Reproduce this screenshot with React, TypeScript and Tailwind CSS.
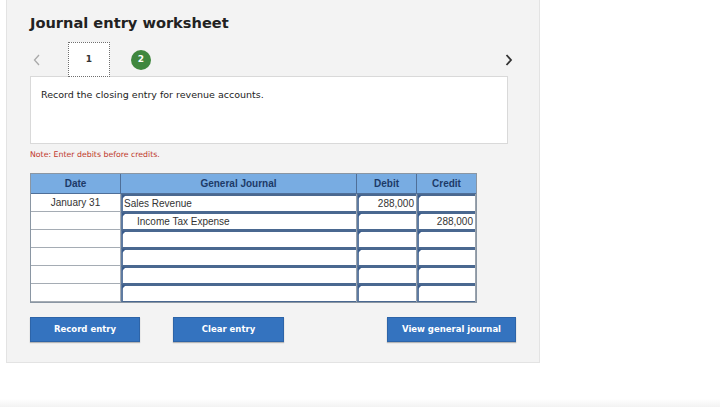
import { ReactNode } from "react";

const verdana = { fontFamily: '"DejaVu Sans", Verdana, sans-serif' };
const arial = { fontFamily: '"Liberation Sans", Arial, sans-serif' };

type Row = { date: string; account: string; indent?: boolean; debit: string; credit: string };

const rows: Row[] = [
  { date: "January 31", account: "Sales Revenue", debit: "288,000", credit: "" },
  { date: "", account: "Income Tax Expense", indent: true, debit: "", credit: "288,000" },
  { date: "", account: "", debit: "", credit: "" },
  { date: "", account: "", debit: "", credit: "" },
  { date: "", account: "", debit: "", credit: "" },
  { date: "", account: "", debit: "", credit: "" },
];

// editable cell: dark blue box with the little marker in the corner
function InputCell({ children, align = "left" }: { children?: ReactNode; align?: "left" | "right" }) {
  return (
    <div className="relative h-[18px] bg-white border-r border-[#9aa3ad]">
      <div
        className={`h-full border-t-2 border-l-2 border-b border-[#4a6890] border-l-[#5f7ba1] flex items-center text-[10px] text-[#333] ${
          align === "right" ? "justify-end pr-[2px]" : "pl-[1px]"
        }`}
      >
        {children}
      </div>
      <div className="absolute left-[1px] top-[1px] w-0 h-0 border-t-[4px] border-t-[#3b5d8c] border-r-[4px] border-r-transparent" />
    </div>
  );
}

function Button({ label, className }: { label: string; className: string }) {
  return (
    <button
      className={`${className} block h-[25px] bg-[#3473bf] border border-[#2d64a8] shadow-[0_1px_1px_rgba(0,0,0,0.25)] text-white font-bold text-[8.5px]`}
      style={verdana}
    >
      {label}
    </button>
  );
}

export default function App() {
  return (
    <div className="w-[720px] h-[407px] bg-white flex flex-col overflow-hidden">
      <div className="ml-[6px] w-[534px] bg-[#f3f3f3] border border-t-0 border-[#e3e3e3] pl-[23px] pt-[14px] pb-[20px]">
        <h1 className="h-[18px] leading-[18px] text-[14.6px] font-bold text-[#222]" style={verdana}>
          Journal entry worksheet
        </h1>

        {/* step navigation */}
        <div className="mt-[10px] h-[35px] w-[488px] flex items-center relative z-10">
          <svg width="8" height="12" viewBox="0 0 8 12" className="ml-[3px]">
            <polyline points="6,1 1.5,6 6,11" fill="none" stroke="#a9a9a9" strokeWidth="1.3" />
          </svg>
          <div className="ml-[27px] w-[42px] h-[35px] bg-white border border-dotted border-[#6f6f6f] flex items-center justify-center">
            <span className="text-[9px] font-bold text-[#333]" style={verdana}>1</span>
          </div>
          <div className="ml-[21px] w-[20px] h-[20px] rounded-full bg-[#3f873e] flex items-center justify-center">
            <span className="text-[9px] font-bold text-white" style={verdana}>2</span>
          </div>
          <svg width="8" height="12" viewBox="0 0 8 12" className="ml-auto mr-[5px]">
            <polyline points="1.5,1 6,6 1.5,11" fill="none" stroke="#333" strokeWidth="1.8" />
          </svg>
        </div>

        <div className="-mt-[1px] w-[478px] h-[68px] bg-white border border-[#d9d9d9] pl-[10px] pt-[11px]">
          <p className="text-[9.5px] text-[#222]" style={verdana}>
            Record the closing entry for revenue accounts.
          </p>
        </div>

        <p className="mt-[5px] h-[12px] leading-[12px] text-[7.8px] text-[#c0392b]" style={verdana}>
          Note: Enter debits before credits.
        </p>

        {/* journal table */}
        <div className="mt-[12px] w-[447px] border border-[#8a96a3]" style={arial}>
          <div className="grid grid-cols-[90px_236px_60px_59px] h-[20px] bg-[#78ace2] border-b border-[#4f6f98] text-[10px] font-bold text-[#1d3a68]">
            <div className="flex items-center justify-center border-r border-[#4f6f98]">Date</div>
            <div className="flex items-center justify-center border-r border-[#4f6f98]">General Journal</div>
            <div className="flex items-center justify-center border-r border-[#4f6f98]">Debit</div>
            <div className="flex items-center justify-center">Credit</div>
          </div>
          {rows.map((r, i) => (
            <div key={i} className="grid grid-cols-[90px_236px_60px_59px]">
              <div className="h-[18px] bg-white border-r border-b border-[#a5acb4] flex items-center justify-center text-[10px] text-[#333]">
                {r.date}
              </div>
              <InputCell>
                <span className={r.indent ? "pl-[13px]" : ""}>{r.account}</span>
              </InputCell>
              <InputCell align="right">{r.debit}</InputCell>
              <InputCell align="right">{r.credit}</InputCell>
            </div>
          ))}
        </div>

        <div className="mt-[14px] w-[486px] flex items-start">
          <Button label="Record entry" className="w-[110px]" />
          <Button label="Clear entry" className="ml-[33px] w-[111px]" />
          <Button label="View general journal" className="ml-auto w-[129px]" />
        </div>
      </div>

      <div className="mt-auto h-[8px] bg-gradient-to-b from-white to-[#f3f3f3]" />
    </div>
  );
}
